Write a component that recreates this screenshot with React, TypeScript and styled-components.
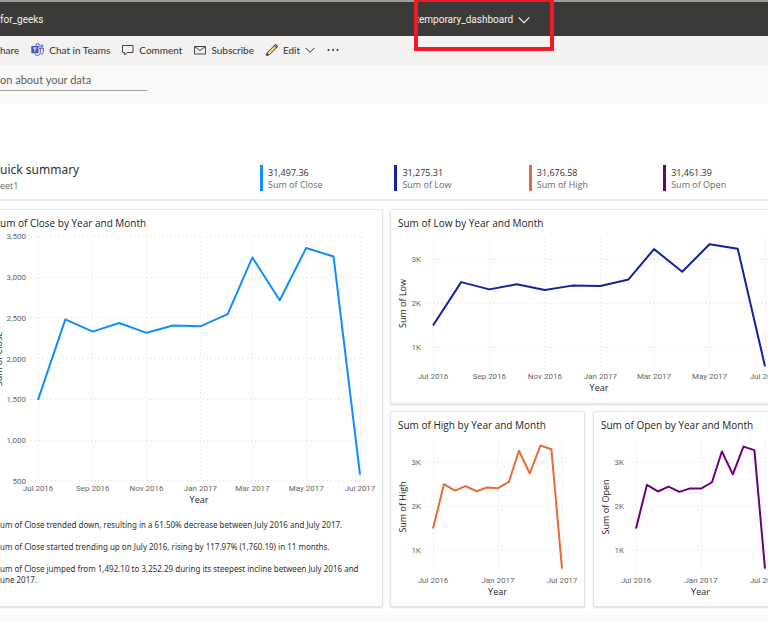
import React from "react";
import styled, { createGlobalStyle } from "styled-components";

const Global = createGlobalStyle`
  * { box-sizing: border-box; }
  body {
    margin: 0;
    background: #faf9f8;
    font-family: "Open Sans", "Noto Sans", sans-serif;
    color: #323130;
  }
  button, input { font: inherit; color: inherit; background: none; border: 0; padding: 0; }
  h1, h2, p, ul { margin: 0; padding: 0; font-weight: 400; }
  #root { overflow: hidden; }
`;

const Header = styled.header`
  display: flex;
  align-items: center;
  height: 36px;
  padding-top: 1px;
  border-top: 2px solid #98a099;
  background: #3b3a39;
  color: #f3f2f1;
  font-family: Roboto, sans-serif;
  font-size: 10px;
  line-height: 14px;
`;

const Workspace = styled.span`
  flex: 0 0 54%;
`;

const Picker = styled.div`
  position: relative;
  align-self: stretch;
  display: flex;
`;

const PickerButton = styled.button`
  display: flex;
  align-items: center;
  gap: 5px;
  padding-left: 1px;
`;

const Highlight = styled.span`
  position: absolute;
  top: -5px;
  left: -1px;
  width: 140px;
  height: 53px;
  border: 4px solid #ed1c24;
  pointer-events: none;
`;

const Toolbar = styled.nav`
  display: flex;
  align-items: center;
  gap: 12px;
  height: 29px;
  padding-bottom: 2px;
  background: #f3f2f1;
  font-family: Lato, sans-serif;
  font-size: 10px;
  line-height: 14px;
`;

const Command = styled.button`
  display: flex;
  align-items: center;
  gap: 5px;
`;

const AskBar = styled.div`
  height: 39px;
  padding-top: 5px;
  background: #faf9f8;
`;

const AskInput = styled.input`
  display: block;
  width: 147px;
  height: 21px;
  padding-bottom: 2px;
  border-bottom: 1px solid #a19f9d;
  outline: 0;
  font-family: Lato, sans-serif;
  font-size: 11px;
  &::placeholder { color: #605e5c; opacity: 1; }
`;

const Board = styled.main`
  padding: 58px 0 8px;
  background: #fff;
`;

const Summary = styled.section`
  display: grid;
  grid-template-columns: 260px repeat(4, 17.5%);
  height: 39px;
  border-bottom: 2px solid #ebebeb;
`;

const SummaryTitle = styled.h1`
  font-family: "Noto Sans", sans-serif;
  font-size: 12px;
  line-height: 16px;
`;

const SummarySource = styled.p`
  margin-top: 2px;
  font-size: 9px;
  line-height: 12px;
  color: #666;
`;

const Kpi = styled.div<{ $color: string }>`
  height: 26px;
  margin-top: 3px;
  padding: 2px 0 0 5px;
  border-left: 3px solid ${(p) => p.$color};
  font-size: 9px;
  line-height: 12px;
  white-space: nowrap;
`;

const KpiLabel = styled.div`
  color: #6e6c6a;
`;

const Tiles = styled.div`
  display: grid;
  grid-template-columns: 383fr 398fr;
  gap: 7px;
  margin: 8px -20px 0 0;
`;

const Column = styled.div`
  display: grid;
  grid-template-columns: 1fr 1fr;
  gap: 7px 8px;
  align-content: start;
`;

const Card = styled.section<{ $wide?: boolean; $bleed?: boolean }>`
  grid-column: ${(p) => (p.$wide ? "1 / -1" : "auto")};
  min-width: 0;
  border: 1px solid #e6e6e6;
  border-left-width: ${(p) => (p.$bleed ? 0 : 1)}px;
  border-radius: ${(p) => (p.$bleed ? "0 2px 2px 0" : "2px")};
  box-shadow: 0 1px 2px rgba(0, 0, 0, 0.14);
  background: #fff;
`;

const CardTitle = styled.h2<{ $bleed?: boolean }>`
  height: 20px;
  padding: 6px 0 0 ${(p) => (p.$bleed ? 0 : 7)}px;
  font-size: 10px;
  font-weight: 500;
  line-height: 14px;
  color: #252423;
  white-space: nowrap;
`;

const Plot = styled.svg`
  display: block;
  width: 100%;
  height: auto;
  font-size: 8px;
`;

const Tick = styled.text`
  font-family: Roboto, sans-serif;
  fill: #666;
`;

const AxisName = styled.text`
  font-size: 9px;
  font-weight: 500;
  fill: #252423;
`;

const Insights = styled.ul`
  display: grid;
  gap: 11px;
  padding: 12px 8px 20px 0;
  list-style: none;
  font-family: "Noto Sans", sans-serif;
  font-size: 8px;
  line-height: 11px;
`;

const DAYS = [0, 31, 62, 92, 123, 153, 184, 215, 243, 274, 304, 335, 365];
const EVERY_TWO = [
  [0, "Jul 2016"], [62, "Sep 2016"], [123, "Nov 2016"], [184, "Jan 2017"],
  [243, "Mar 2017"], [304, "May 2017"], [365, "Jul 2017"],
] as [number, string][];
const EVERY_SIX = [[0, "Jul 2016"], [184, "Jan 2017"], [365, "Jul 2017"]] as [number, string][];
const THOUSANDS = [[3000, "3K"], [2000, "2K"], [1000, "1K"]] as [number, string][];

type ChartProps = {
  name: string;
  color: string;
  width: number;
  height: number;
  left: number;
  right: number;
  top: number;
  bottom: number;
  /** y of value 1000, and pixels per 1000 */
  base: number;
  unit: number;
  values: number[];
  xTicks: [number, string][];
  yTicks: [number, string][];
  tickRight: number;
  nameX: number;
};

function LineChart(p: ChartProps) {
  const x = (d: number) => p.left + (d / 365) * (p.right - p.left);
  const y = (v: number) => p.base - ((v - 1000) / 1000) * p.unit;
  const mid = (p.top + p.bottom) / 2;
  return (
    <Plot viewBox={`0 0 ${p.width} ${p.height}`} role="img" aria-label={`${p.name} by Year and Month`}>
      <g stroke="#dedede" strokeDasharray="1 3" shapeRendering="crispEdges">
        {p.yTicks.map(([v]) => (
          <line key={v} x1={p.left - 7} x2={p.right + 6} y1={y(v)} y2={y(v)} />
        ))}
        {p.xTicks.map(([d]) => (
          <line key={d} x1={x(d)} x2={x(d)} y1={p.top} y2={p.bottom} />
        ))}
      </g>
      {p.yTicks.map(([v, t]) => (
        <Tick key={t} x={p.tickRight} y={y(v) + 3} textAnchor="end">{t}</Tick>
      ))}
      {p.xTicks.map(([d, t]) => (
        <Tick key={t} x={x(d)} y={p.bottom + 10} textAnchor="middle">{t}</Tick>
      ))}
      <AxisName x={(p.left + p.right) / 2} y={p.bottom + 22} textAnchor="middle">Year</AxisName>
      <AxisName transform={`translate(${p.nameX} ${mid}) rotate(-90)`} textAnchor="middle">{p.name}</AxisName>
      <polyline
        fill="none"
        stroke={p.color}
        strokeWidth="2"
        strokeLinejoin="round"
        points={p.values.map((v, i) => `${x(DAYS[i])},${y(v)}`).join(" ")}
      />
    </Plot>
  );
}

const Chevron = ({ size }: { size: number }) => (
  <svg width={size} height={size} viewBox="0 0 10 10" fill="none" stroke="currentColor">
    <path d="M.5 2.8 5 7.3l4.5-4.5" />
  </svg>
);

const TeamsIcon = () => (
  <svg width="13" height="13" viewBox="0 0 13 13" fill="none" stroke="#4b53bc">
    <circle cx="6.7" cy="2.3" r="1.7" />
    <circle cx="10.8" cy="3" r="1.1" />
    <path d="M8 5.2h4.3v3.6c0 1.6-1 2.4-2.4 2.3M9.3 5.2v4.1c0 2-1.2 3.1-2.9 3.1-1.3 0-2.2-.6-2.7-1.6" />
    <rect x=".3" y="3" width="7.2" height="7.2" rx=".6" fill="#4b53bc" stroke="none" />
    <path d="M2 5h3.8M3.9 5v3.7" stroke="#fff" />
  </svg>
);

const CommentIcon = () => (
  <svg width="12" height="12" viewBox="0 0 12 12" fill="none" stroke="#444">
    <path d="M.5 1.5h10.5v7H5.2L2.7 11V8.5H.5z" />
  </svg>
);

const MailIcon = () => (
  <svg width="12" height="10" viewBox="0 0 12 10" fill="none" stroke="#444">
    <path d="M.5 1.5h11v7.5H.5zM.8 1.8 6 5.5l5.2-3.7" />
  </svg>
);

const PencilIcon = () => (
  <svg width="12" height="12" viewBox="0 0 12 12" strokeLinejoin="round">
    <path d="M.7 11.3 1.5 8.3 8.7 1.1C10 .2 11.8 2 10.9 3.3L3.7 10.5z" fill="#f5d283" stroke="#444" />
    <path d="M8.2 1.6l2.2 2.2.7-.8c.6-1.2-.9-2.6-2.1-2.1z" fill="#a58bc4" stroke="#444" />
    <path d="M.7 11.3l.5-2 1.5 1.5z" fill="#444" stroke="#444" />
  </svg>
);

const MoreIcon = () => (
  <svg width="12" height="4" viewBox="0 0 12 4" fill="#323130">
    <circle cx="1.5" cy="2" r="1" />
    <circle cx="6" cy="2" r="1" />
    <circle cx="10.5" cy="2" r="1" />
  </svg>
);

const KPIS = [
  ["31,497.36", "Sum of Close", "#118dff"],
  ["31,275.31", "Sum of Low", "#12239e"],
  ["31,676.58", "Sum of High", "#e66c37"],
  ["31,461.39", "Sum of Open", "#6b007b"],
];

export default function App() {
  return (
    <>
      <Global />
      <Header>
        <Workspace>for_geeks</Workspace>
        <Picker>
          <PickerButton type="button">
            temporary_dashboard
            <Chevron size={12} />
          </PickerButton>
          <Highlight />
        </Picker>
      </Header>
      <Toolbar aria-label="Dashboard commands">
        <Command type="button">hare</Command>
        <Command type="button"><TeamsIcon />Chat in Teams</Command>
        <Command type="button"><CommentIcon />Comment</Command>
        <Command type="button"><MailIcon />Subscribe</Command>
        <Command type="button"><PencilIcon />Edit <Chevron size={10} /></Command>
        <Command type="button" aria-label="More options"><MoreIcon /></Command>
      </Toolbar>
      <AskBar>
        <AskInput aria-label="Ask about your data" placeholder="on about your data" />
      </AskBar>
      <Board>
        <Summary>
          <div>
            <SummaryTitle>uick summary</SummaryTitle>
            <SummarySource>eet1</SummarySource>
          </div>
          {KPIS.map(([value, label, color]) => (
            <Kpi key={label} $color={color}>
              {value}
              <KpiLabel>{label}</KpiLabel>
            </Kpi>
          ))}
        </Summary>
        <Tiles>
          <Card $bleed>
            <CardTitle $bleed>um of Close by Year and Month</CardTitle>
            <LineChart
              name="Sum of Close" color="#118dff" width={382} height={277}
              left={38} right={360} top={7} bottom={251} base={210} unit={81.5}
              values={[1492, 2480, 2330, 2435, 2315, 2405, 2395, 2545, 3240, 2715, 3355, 3252, 575]}
              xTicks={EVERY_TWO}
              yTicks={[[3500, "3,500"], [3000, "3,000"], [2500, "2,500"], [2000, "2,000"], [1500, "1,500"], [1000, "1,000"], [500, "500"]]}
              tickRight={26} nameX={2}
            />
            <Insights>
              <li>um of Close trended down, resulting in a 61.50% decrease between July 2016 and July 2017.</li>
              <li>um of Close started trending up on July 2016, rising by 117.97% (1,760.19) in 11 months.</li>
              <li>um of Close jumped from 1,492.10 to 3,252.29 during its steepest incline between July 2016 and<br />une 2017.</li>
            </Insights>
          </Card>
          <Column>
            <Card $wide>
              <CardTitle>Sum of Low by Year and Month</CardTitle>
              <LineChart
                name="Sum of Low" color="#12239e" width={396} height={173}
                left={42} right={374} top={8} bottom={139} base={117} unit={44}
                values={[1490, 2475, 2310, 2425, 2295, 2395, 2385, 2535, 3225, 2710, 3335, 3235, 560]}
                xTicks={EVERY_TWO} yTicks={THOUSANDS} tickRight={30} nameX={15}
              />
            </Card>
            <Card>
              <CardTitle>Sum of High by Year and Month</CardTitle>
              <LineChart
                name="Sum of High" color="#e66c37" width={193} height={174}
                left={42} right={171} top={9} bottom={141} base={118} unit={44}
                values={[1490, 2495, 2350, 2450, 2335, 2420, 2405, 2550, 3255, 2740, 3375, 3290, 575]}
                xTicks={EVERY_SIX} yTicks={THOUSANDS} tickRight={30} nameX={15}
              />
            </Card>
            <Card>
              <CardTitle>Sum of Open by Year and Month</CardTitle>
              <LineChart
                name="Sum of Open" color="#6b007b" width={193} height={174}
                left={42} right={171} top={9} bottom={141} base={118} unit={44}
                values={[1490, 2480, 2330, 2440, 2320, 2400, 2395, 2540, 3240, 2720, 3350, 3270, 575]}
                xTicks={EVERY_SIX} yTicks={THOUSANDS} tickRight={30} nameX={15}
              />
            </Card>
          </Column>
        </Tiles>
      </Board>
    </>
  );
}
